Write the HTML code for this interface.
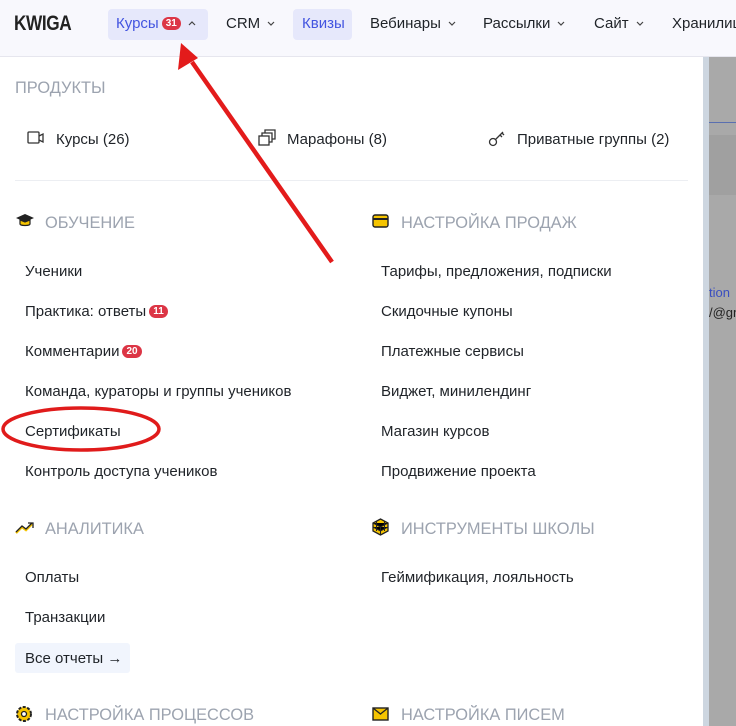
<!DOCTYPE html>
<html><head><meta charset="utf-8"><style>
*{margin:0;padding:0;box-sizing:border-box}
body{width:736px;height:726px;overflow:hidden;background:#fff;font-family:"Liberation Sans",sans-serif;position:relative;color:#1f2328}
.hdr{position:absolute;left:0;top:0;width:736px;height:57px;background:#f8f8fd;border-bottom:1px solid #e6e6ee}
.a{position:absolute;white-space:nowrap}
.nav{font-size:15px;top:15px}
.pill{position:absolute;background:#e6e8fb;border-radius:4px}
.t{font-size:15px;position:absolute;white-space:nowrap}
.h{font-size:16.4px;color:#9ca3af;position:absolute;white-space:nowrap}
.b{display:inline-block;background:#dc3545;color:#fff;font-size:10px;font-weight:bold;border-radius:8px;padding:1px 4px;vertical-align:2px;margin-left:3px;line-height:11px}
.cv{display:inline-block;margin-left:7px;vertical-align:2px}
</style></head><body>
<div class="hdr"></div>
<div class="a" style="left:14px;top:12px;font-size:21px;font-weight:bold;letter-spacing:-0.5px;color:#222;transform:scaleX(0.82);transform-origin:left">KWIGA</div>
<div class="pill" style="left:108px;top:9px;width:100px;height:31px"></div>
<div class="pill" style="left:293px;top:9px;width:59px;height:31px"></div>
<div class="a nav" style="left:116px;color:#4355e0">Курсы<span class="b">31</span><svg class="cv" width="8" height="5" viewBox="0 0 8 5"><path d="M1 4l3-3 3 3" fill="none" stroke="#444" stroke-width="1.2"/></svg></div>
<div class="a nav" style="left:226px">CRM<svg class="cv" width="8" height="5" viewBox="0 0 8 5"><path d="M1 1l3 3 3-3" fill="none" stroke="#444" stroke-width="1.2"/></svg></div>
<div class="a nav" style="left:302px;color:#4355e0">Квизы</div>
<div class="a nav" style="left:370px">Вебинары<svg class="cv" width="8" height="5" viewBox="0 0 8 5"><path d="M1 1l3 3 3-3" fill="none" stroke="#444" stroke-width="1.2"/></svg></div>
<div class="a nav" style="left:483px">Рассылки<svg class="cv" width="8" height="5" viewBox="0 0 8 5"><path d="M1 1l3 3 3-3" fill="none" stroke="#444" stroke-width="1.2"/></svg></div>
<div class="a nav" style="left:594px">Сайт<svg class="cv" width="8" height="5" viewBox="0 0 8 5"><path d="M1 1l3 3 3-3" fill="none" stroke="#444" stroke-width="1.2"/></svg></div>
<div class="a nav" style="left:672px">Хранилище</div>

<div style="position:absolute;left:703px;top:57px;width:6px;height:669px;background:#cdd6e0"></div>
<div style="position:absolute;left:709px;top:57px;width:27px;height:669px;background:#a9a9a9"></div>
<div style="position:absolute;left:709px;top:122px;width:27px;height:1px;background:#5a6fb0"></div>
<div style="position:absolute;left:709px;top:135px;width:27px;height:60px;background:#a0a0a0"></div>
<div class="a" style="left:709px;top:285px;font-size:13px;color:#3a4fc0">tion</div>
<div class="a" style="left:709px;top:305px;font-size:13px;color:#222">/@gm</div>

<div class="h" style="left:15px;top:79px">ПРОДУКТЫ</div>
<svg class="a" style="left:27px;top:130px" width="18" height="16" viewBox="0 0 18 16" fill="none" stroke="#333" stroke-width="1.3"><rect x="1" y="2" width="11" height="11" rx="1"/><path d="M12 6l4-2v8l-4-2"/></svg>
<div class="t" style="left:56px;top:131px">Курсы (26)</div>
<svg class="a" style="left:258px;top:129px" width="18" height="18" viewBox="0 0 18 18" fill="none" stroke="#333" stroke-width="1.3"><rect x="1" y="7" width="10" height="9"/><path d="M4 7V4h10v9h-3M7 4V1h10v9h-3"/></svg>
<div class="t" style="left:287px;top:131px">Марафоны (8)</div>
<svg class="a" style="left:488px;top:129px" width="18" height="18" viewBox="0 0 18 18" fill="none" stroke="#333" stroke-width="1.3"><circle cx="5" cy="13" r="3.5"/><path d="M7.5 10.5L15 3M12 6l2 2M14 4l2 2"/></svg>
<div class="t" style="left:517px;top:131px">Приватные группы (2)</div>
<div style="position:absolute;left:15px;top:180px;width:673px;height:1px;background:#eceef2"></div>

<svg class="a" style="left:15px;top:213px" width="20" height="16" viewBox="0 0 20 16"><path d="M10 1L1 5l9 4 9-4z" fill="#222"/><path d="M5 7v4c0 2 10 2 10 0V7l-5 2z" fill="#f5c400" stroke="#222" stroke-width="1.2"/></svg>
<div class="h" style="left:45px;top:214px">ОБУЧЕНИЕ</div>
<svg class="a" style="left:372px;top:214px" width="17" height="14" viewBox="0 0 17 14"><rect x="1" y="1" width="15" height="12" rx="2" fill="#f5c400" stroke="#222" stroke-width="1.4"/><rect x="1" y="4" width="15" height="2" fill="#222"/></svg>
<div class="h" style="left:401px;top:214px">НАСТРОЙКА ПРОДАЖ</div>

<div class="t" style="left:25px;top:263px">Ученики</div>
<div class="t" style="left:25px;top:303px">Практика: ответы<span class="b">11</span></div>
<div class="t" style="left:25px;top:343px">Комментарии<span class="b">20</span></div>
<div class="t" style="left:25px;top:383px">Команда, кураторы и группы учеников</div>
<div class="t" style="left:25px;top:423px">Сертификаты</div>
<div class="t" style="left:25px;top:463px">Контроль доступа учеников</div>

<div class="t" style="left:381px;top:263px">Тарифы, предложения, подписки</div>
<div class="t" style="left:381px;top:303px">Скидочные купоны</div>
<div class="t" style="left:381px;top:343px">Платежные сервисы</div>
<div class="t" style="left:381px;top:383px">Виджет, минилендинг</div>
<div class="t" style="left:381px;top:423px">Магазин курсов</div>
<div class="t" style="left:381px;top:463px">Продвижение проекта</div>

<svg class="a" style="left:15px;top:521px" width="20" height="14" viewBox="0 0 20 14" fill="none"><path d="M1 12l6-6 4 3 6-6" stroke="#f5c400" stroke-width="2.4"/><path d="M1 11l6-6 4 3 6-6M13 2h5v5" stroke="#222" stroke-width="1.3"/></svg>
<div class="h" style="left:45px;top:520px">АНАЛИТИКА</div>
<svg class="a" style="left:372px;top:518px" width="17" height="18" viewBox="0 0 17 18"><path d="M8.5 1L16 5v8l-7.5 4L1 13V5z" fill="#f5c400" stroke="#222" stroke-width="1.3"/><path d="M1 5l7.5 4L16 5M8.5 9v8M4.5 3v10M12.5 3v10M1 9l7.5 4 7.5-4" stroke="#222" stroke-width="1"/></svg>
<div class="h" style="left:401px;top:520px">ИНСТРУМЕНТЫ ШКОЛЫ</div>

<div class="t" style="left:25px;top:569px">Оплаты</div>
<div class="t" style="left:25px;top:609px">Транзакции</div>
<div style="position:absolute;left:15px;top:643px;width:115px;height:30px;background:#f1f5fd;border-radius:3px"></div>
<div class="t" style="left:25px;top:650px">Все отчеты →</div>
<div class="t" style="left:381px;top:569px">Геймификация, лояльность</div>

<svg class="a" style="left:15px;top:705px" width="18" height="18" viewBox="0 0 18 18"><circle cx="9" cy="9" r="7" fill="#f5c400" stroke="#222" stroke-width="2" stroke-dasharray="3 1.5"/><circle cx="9" cy="9" r="2.5" fill="#fff" stroke="#222" stroke-width="1.3"/></svg>
<div class="h" style="left:45px;top:706px">НАСТРОЙКА ПРОЦЕССОВ</div>
<svg class="a" style="left:372px;top:707px" width="17" height="14" viewBox="0 0 17 14"><rect x="1" y="1" width="15" height="12" fill="#f5c400" stroke="#222" stroke-width="1.4"/><path d="M1 1l7.5 6L16 1" fill="none" stroke="#222" stroke-width="1.3"/></svg>
<div class="h" style="left:401px;top:706px">НАСТРОЙКА ПИСЕМ</div>

<svg style="position:absolute;left:0;top:0" width="736" height="726">
<line x1="332" y1="262" x2="192" y2="62" stroke="#e31b1b" stroke-width="4.5"/>
<polygon points="181,43 178,70 198,58" fill="#e31b1b"/>
<ellipse cx="81" cy="429" rx="78" ry="21" fill="none" stroke="#e01b1b" stroke-width="3.5"/>
</svg>
</body></html>
